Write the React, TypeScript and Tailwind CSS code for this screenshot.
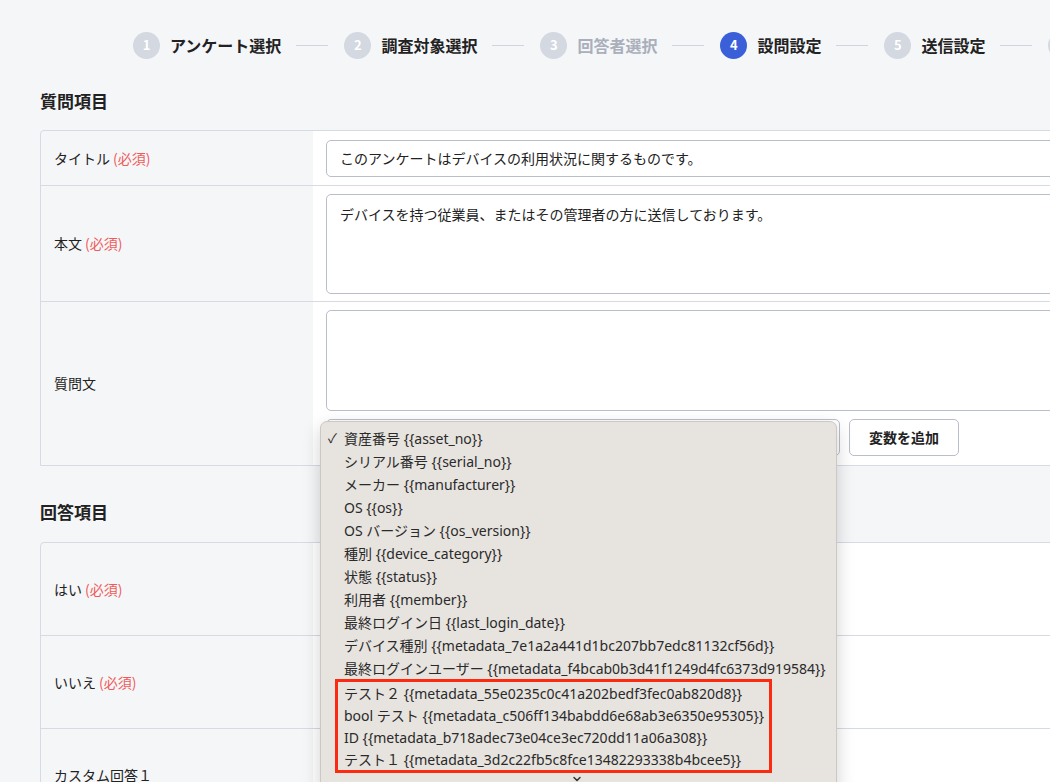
import { ChevronDown } from "lucide-react";

const steps = [
  { n: 1, label: "アンケート選択", state: "done" },
  { n: 2, label: "調査対象選択", state: "done" },
  { n: 3, label: "回答者選択", state: "disabled" },
  { n: 4, label: "設問設定", state: "active" },
  { n: 5, label: "送信設定", state: "done" },
  { n: 6, label: "確認", state: "done" },
] as const;

const variables = [
  "資産番号 {{asset_no}}",
  "シリアル番号 {{serial_no}}",
  "メーカー {{manufacturer}}",
  "OS {{os}}",
  "OS バージョン {{os_version}}",
  "種別 {{device_category}}",
  "状態 {{status}}",
  "利用者 {{member}}",
  "最終ログイン日 {{last_login_date}}",
  "デバイス種別 {{metadata_7e1a2a441d1bc207bb7edc81132cf56d}}",
  "最終ログインユーザー {{metadata_f4bcab0b3d41f1249d4fc6373d919584}}",
];

const highlighted = [
  "テスト２ {{metadata_55e0235c0c41a202bedf3fec0ab820d8}}",
  "bool テスト {{metadata_c506ff134babdd6e68ab3e6350e95305}}",
  "ID {{metadata_b718adec73e04ce3ec720dd11a06a308}}",
  "テスト１ {{metadata_3d2c22fb5c8fce13482293338b4bcee5}}",
];

function Required() {
  return <span className="ml-[3px] text-[#ef5b5b]">(必須)</span>;
}

function Stepper() {
  return (
    <div className="flex h-[90px] items-center whitespace-nowrap pl-[133px]">
      {steps.map((s, i) => (
        <div key={s.n} className="flex items-center">
          {i > 0 && <div className="ml-[15px] mr-4 h-px w-8 bg-[#cfd4de]" />}
          <div
            className={
              s.state === "active"
                ? "flex h-[27px] w-[27px] items-center justify-center rounded-full bg-[#3a5fd9] text-[13px] font-bold text-white"
                : "flex h-[27px] w-[27px] items-center justify-center rounded-full bg-[#d3d8e1] text-[13px] font-bold text-white"
            }
          >
            {s.n}
          </div>
          <span
            className={
              s.state === "disabled"
                ? "ml-[10px] text-[16px] font-bold text-[#a9afbb]"
                : "ml-[10px] text-[16px] font-bold text-[#222]"
            }
          >
            {s.label}
          </span>
        </div>
      ))}
    </div>
  );
}

function VariableMenu() {
  return (
    <div className="absolute left-[-7px] top-[1px] z-10 w-[517px] rounded-[7px] border border-[#cdc8c3] bg-[#e7e3df] pb-[30px] pt-[5px] font-['Noto_Sans','Noto_Sans_CJK_JP',sans-serif] text-[14px] text-[#2a2a2a] shadow-[0_6px_18px_rgba(0,0,0,0.18)]">
      {variables.map((v, i) => (
        <div key={v} className="flex h-[23px] items-center">
          <span className="w-[23px] pl-[7px] text-[13px]">{i === 0 ? "✓" : ""}</span>
          <span>{v}</span>
        </div>
      ))}
      <div className="ml-[14px] mt-[-1px] w-[437px] border-[3px] border-[#fb2a10]">
        {highlighted.map((v) => (
          <div key={v} className="flex h-[22px] items-center pl-[6px]">
            {v}
          </div>
        ))}
      </div>
      <div className="flex h-[12px] items-start pl-[250px] text-[#333]">
        <ChevronDown size={12} strokeWidth={3} />
      </div>
    </div>
  );
}

export default function App() {
  return (
    <div className="h-[782px] w-[1050px] overflow-hidden bg-[#f5f6f8] font-['Noto_Sans_CJK_JP',sans-serif] text-[#222]">
      <Stepper />

      <div className="pl-10">
        <h2 className="text-[17px] font-bold leading-[22px]">質問項目</h2>

        <div className="mt-[18px] w-[1100px] rounded-tl-[4px] border border-[#d5dae3] text-[14px]">
          <div className="flex h-[55px] border-b border-[#d5dae3]">
            <div className="flex w-[272px] items-center pl-[13px]">
              タイトル<Required />
            </div>
            <div className="flex flex-1 items-center bg-white pl-[13px]">
              <div className="flex h-[37px] w-full items-center rounded-[5px] border border-[#b9becb] pl-[13px] text-[14px]">
                このアンケートはデバイスの利用状況に関するものです。
              </div>
            </div>
          </div>

          <div className="flex h-[116px] border-b border-[#d5dae3]">
            <div className="flex w-[272px] items-center pl-[13px]">
              本文<Required />
            </div>
            <div className="flex flex-1 items-center bg-white pl-[13px]">
              <div className="h-[100px] w-full rounded-[5px] border border-[#b9becb] pl-[13px] pt-[9px] text-[14px]">
                デバイスを持つ従業員、またはその管理者の方に送信しております。
              </div>
            </div>
          </div>

          <div className="flex h-[163px]">
            <div className="flex w-[272px] items-center pl-[13px]">質問文</div>
            <div className="flex-1 bg-white pl-[13px] pt-[8px]">
              <div className="h-[101px] w-full rounded-[5px] border border-[#b9becb]" />
              <div className="mt-[8px] flex gap-[9px]">
                <div className="relative h-[37px] w-[514px] rounded-[5px] border border-[#b9becb]">
                  <VariableMenu />
                </div>
                <div className="flex h-[37px] w-[110px] items-center justify-center rounded-[5px] border border-[#b9becb] text-[14px] font-bold">
                  変数を追加
                </div>
              </div>
            </div>
          </div>
        </div>

        <h2 className="mt-[35px] text-[17px] font-bold leading-[22px]">回答項目</h2>

        <div className="mt-[19px] w-[1100px] rounded-tl-[4px] border border-[#d5dae3] text-[14px]">
          <div className="flex h-[93px] border-b border-[#d5dae3]">
            <div className="flex w-[272px] items-center pl-[13px]">
              はい<Required />
            </div>
            <div className="flex-1 bg-white" />
          </div>
          <div className="flex h-[93px] border-b border-[#d5dae3]">
            <div className="flex w-[272px] items-center pl-[13px]">
              いいえ<Required />
            </div>
            <div className="flex-1 bg-white" />
          </div>
          <div className="flex h-[93px]">
            <div className="flex w-[272px] items-center pl-[13px]">カスタム回答１</div>
            <div className="flex-1 bg-white" />
          </div>
        </div>
      </div>
    </div>
  );
}
